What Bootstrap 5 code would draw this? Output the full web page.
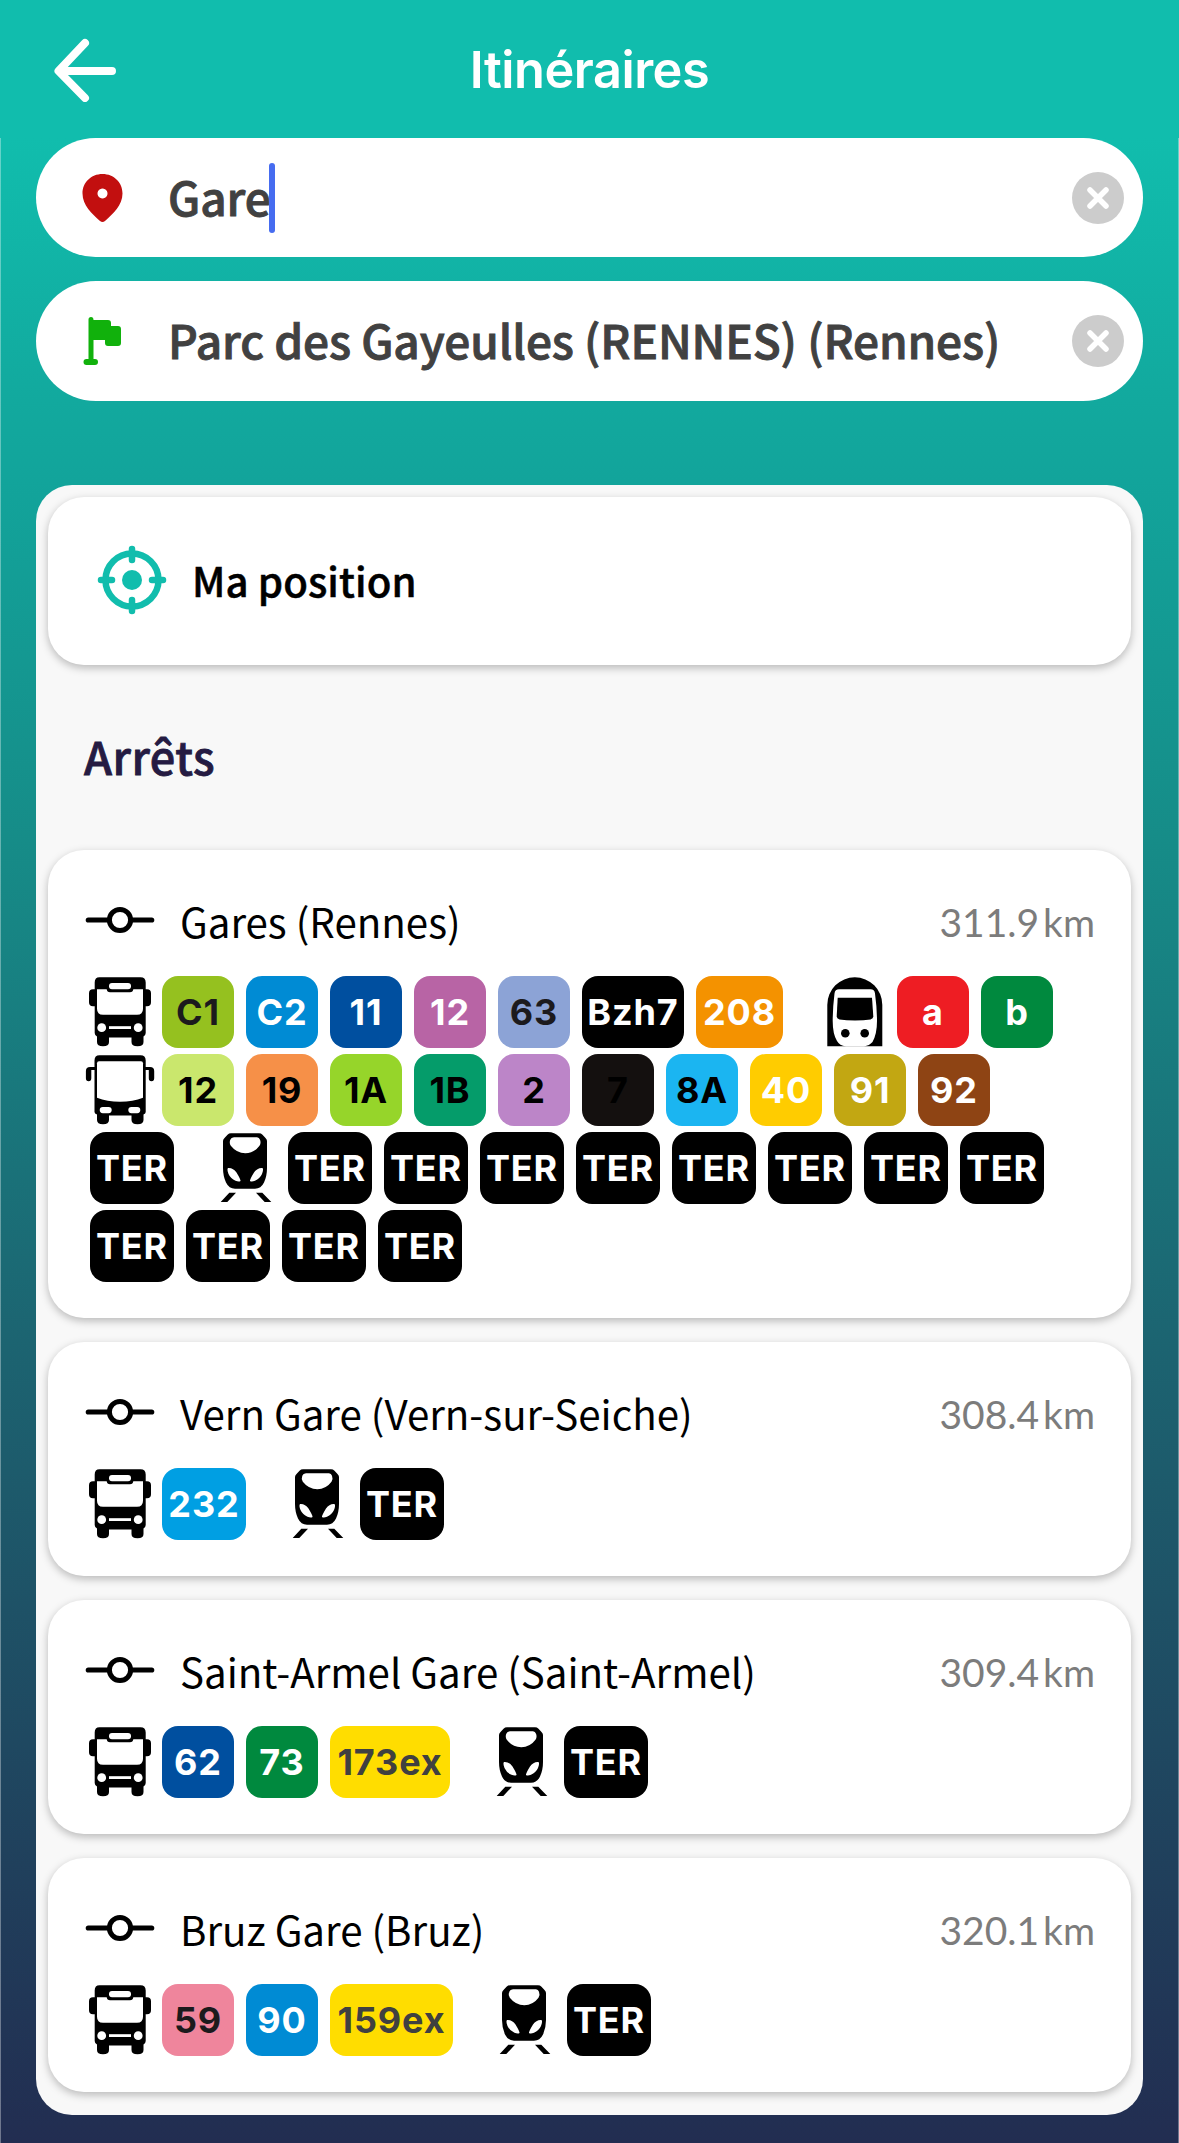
<!DOCTYPE html>
<html lang="fr">
<head>
<meta charset="utf-8">
<meta name="viewport" content="width=device-width, initial-scale=1">
<title>Itinéraires</title>
<link href="https://cdn.jsdelivr.net/npm/bootstrap@5.3.0/dist/css/bootstrap.min.css" rel="stylesheet">
<style>
  body { font-family: "Noto Sans CJK SC", "Noto Sans", sans-serif; background: #222d51; color: #000; }
  .topbar { height: 138px; background: #11bdad; padding: 2px 54px 0; }
  .topbar h1 { font: 600 50.500px/1 Inter, sans-serif; letter-spacing: -.5px; color: #fff; }
  .side { width: 62px; }
  .screen { height: 2005px; padding: 0 35px; border: solid rgba(255,255,255,.35); border-width: 0 1px;
    background: linear-gradient(180deg, #11bdad 0, #12a99e 262px, #12a49b 342px, #168c88 702px, #1c6471 1202px, #222d51 2005px); }
  .field { height: 120px; border-radius: 60px; background: #fff; color: #414141; font-size: 46px; line-height: 60px; font-weight: 500; letter-spacing: -.1px; padding: 0 19px 0 43px; }
  .field-label { padding-bottom: 4px; -webkit-text-stroke: .9px #414141; }
  .field-first { height: 119px; margin-bottom: 24px; }
  .field-icon { width: 48px; height: 48px; margin-right: 41px; }
  .caret { width: 6px; height: 70px; margin-left: -2px; border-radius: 3px; background: #466cf0; }
  .panel { margin-top: 84px; height: 1630px; border-radius: 36px; background: #f8f8f8; padding: 12px; }
  .tile { border: 0; border-radius: 36px; box-shadow: 0 3px 8px rgba(0,0,0,.26); color: #000; }
  .tile-pos { height: 168px; padding: 0 48px 2px; font-size: 40.200px; font-weight: 500; letter-spacing: .1px; -webkit-text-stroke: .5px #000; }
  .section-title { height: 185px; padding: 0 0 4px 36px; font-size: 45px; font-weight: 500; letter-spacing: .5px; color: #251b42; -webkit-text-stroke: .8px #251b42; }
  .stop { padding: 36px; margin-bottom: 24px; }
  .stop-head { height: 72px; margin-bottom: 18px; padding-left: 1px; font-size: 40.250px; }
  .stop-head .stop-name { padding-bottom: 2px; }
  .stop-icon { margin: 0 25px 4px 0; }
  .dist { font: 400 39px/1 Lato, sans-serif; word-spacing: -6px; color: #7c7c7c; }
  .lines { height: 72px; margin-bottom: 6px; }
  .lines:last-child { margin-bottom: 0; }
  .mode { width: 72px; height: 72px; }
  .mode-next { margin-left: 30px; }
  .ln { height: 72px; min-width: 72px; margin: 0 6px; border-radius: 16px; font: 650 36px/72px Inter, sans-serif; letter-spacing: .9px; text-align: center; color: #fff; background: #000; }
  .w84 { width: 84px; } .w87 { width: 87px; } .w102 { width: 102px; } .w120 { width: 120px; } .w123 { width: 123px; }
  .ink { color: #1c1a1d; } .blk { color: #000; } .gry { color: #404040; }
  .c-c1 { background: #95c11f; } .c-c2 { background: #008bd4; } .c-11 { background: #004f9f; } .c-12 { background: #b864a5; }
  .c-63 { background: #8ca3d6; } .c-208 { background: #f49200; } .c-a { background: #ee1d23; } .c-b { background: #00893e; }
  .c-12i { background: #cae76d; } .c-19 { background: #f69048; } .c-1a { background: #96d52a; } .c-1b { background: #059c6a; }
  .c-2 { background: #bc85c8; } .c-7 { background: #14100f; } .c-8a { background: #1bb5f1; } .c-40 { background: #ffcc00; }
  .c-91 { background: #c2a712; } .c-92 { background: #8e4414; } .c-232 { background: #009fe3; } .c-ex { background: #ffdd00; } .c-59 { background: #ef859c; }
</style>
</head>
<body>
<svg class="d-none" aria-hidden="true">
  <symbol id="bus" viewBox="0 0 72 72">
    <path d="M15.500 1.300h41q5.200 0 5.200 5.200V13.300h1.300q4 0 4 4v9q0 4-4 4h-1.300V57q0 2-2.200 3.500V66q0 4.300-6 4.300T47.500 66V61.500H25V66q0 4.300-6 4.300T13 66V60.500Q10.700 59 10.700 57V30.300H9q-4 0-4-4v-9q0-4 4-4h1.700V6.500q0-5.200 4.800-5.200z"/>
    <path fill="#fff" d="M13 13.300h9.700q.3 3 3.300 3h20q3 0 3.300-3H59v19.400q0 6-6 6H19q-6 0-6-6z"/>
    <rect x="25" y="7" width="22" height="6.300" rx="3" fill="#fff"/>
    <circle cx="17.700" cy="51.700" r="4.400" fill="#fff"/><circle cx="54.200" cy="51.700" r="4.400" fill="#fff"/>
    <rect x="25" y="50.200" width="22" height="2.800" fill="#fff"/>
  </symbol>
  <symbol id="coach" viewBox="0 0 72 72">
    <path d="M15.500 1.300h41q5.200 0 5.200 5.200V13h4.300q4.200 0 4.200 4v7.300q0 3-2.700 3t-2.700-3V16h-3.100v42q0 1.500-2.200 2.500V66q0 4.200-6 4.200T47.500 66V61.500H25V66q0 4.200-6 4.200T13 66V60.500Q10.500 59.500 10.500 58V16H7.300v8.300q0 3-2.700 3t-2.700-3V17q0-4 4.200-4h4.400V6.500q0-5.200 5-5.200z"/>
    <path fill="#fff" d="M15 7.300H57Q59 7.300 59 9.300V43.700Q49 47.700 36 47.700T13 43.700V9.300Q13 7.300 15 7.300z"/>
    <rect x="15.700" y="53" width="12" height="6.200" rx="3.100" fill="#fff"/><rect x="44.300" y="53" width="12" height="6.200" rx="3.100" fill="#fff"/>
  </symbol>
  <symbol id="metro" viewBox="0 0 72 72">
    <path d="M8.300 70.300V28.800a27.500 27.500 0 0 1 55 0V70.300z"/>
    <path fill="#fff" d="M20 13.300H51.500q4 0 4.500 4.200Q58 32 58 45 58 58 53.500 66 50.500 69.500 45 70.500H27Q20.500 69.500 18 65 13.700 58 13.700 45 13.700 32 15.500 17.500q.5-4.200 4.500-4.200z"/>
    <path d="M18.700 21.700H53L54.300 40.500Q54.300 42.700 51.500 43.500 45 44.600 36 44.600T20.500 43.500Q17.700 42.700 17.700 40.500z"/>
    <circle cx="26.300" cy="57.300" r="4.300"/><circle cx="45.700" cy="57.300" r="4.300"/>
  </symbol>
  <symbol id="train" viewBox="0 0 72 72">
    <path d="M21 1.300H49q2 0 3.500 1.400l3 3.300Q57 7.500 57 9V36q0 8-3 14.500-3 6.200-9 6.200H25q-6 0-9-6.200Q13 44 13 36V9q0-1.500 1.500-3l3-3.300Q19 1.300 21 1.300z"/>
    <path fill="#fff" d="M24 5.300H47q2.200 0 3 2.500 1.300 3.200-.5 6Q44 21.200 35.300 21.200T20.800 13.800q-1.800-2.800-.5-6 .8-2.500 3.700-2.500z"/>
    <path fill="#fff" d="M18 36q5-.5 8.500 4.500 4.500 7.500 4 8.500-1.500 1.200-5-.2-4.800-2-7-6.800-1.800-4.500-.5-6zM52.500 36q-5-.5-8.500 4.500-4.500 7.500-4 8.500 1.500 1.200 5-.2 4.800-2 7-6.800 1.800-4.500.5-6z"/>
    <path d="M19.300 60.700H26L17.300 70H10.700zM46 60.700h6.300l9 9.300H54.700z"/>
  </symbol>
  <symbol id="stop" viewBox="0 0 70 30">
    <path d="M3.300 15H66.700" stroke="#000" stroke-width="5.200" stroke-linecap="round"/>
    <circle cx="35" cy="15" r="10.600" fill="#fff" stroke="#000" stroke-width="5"/>
  </symbol>
  <symbol id="clear" viewBox="0 0 52 52">
    <circle cx="26" cy="26" r="26" fill="#ccc"/>
    <path d="M18 18 34 34M34 18 18 34" stroke="#fff" stroke-width="5.500" stroke-linecap="round"/>
  </symbol>
</svg>

<header class="topbar d-flex align-items-center justify-content-between">
  <div class="side"><svg width="62" height="64" viewBox="0 0 62 64" fill="none" stroke="#fff" stroke-width="8" stroke-linecap="round" stroke-linejoin="round"><path d="M31 5 4.500 33 31 60M6 33H58"/></svg></div>
  <h1 class="m-0">Itinéraires</h1>
  <div class="side"></div>
</header>

<main class="screen">
  <div class="field field-first d-flex align-items-center">
    <svg class="field-icon" viewBox="0 0 48 48"><path fill="#c20f0f" fill-rule="evenodd" d="M23.500 0C12 0 3.500 8.500 3.500 19.500 3.500 31 13 40 21 47q2.500 1.800 5 0C34 40 43.500 31 43.500 19.500 43.500 8.500 35 0 23.500 0zm0 14.500a5 5 0 1 0 .01 0z"/></svg>
    <span class="field-label">Gare</span><span class="caret"></span>
    <svg class="ms-auto" width="52" height="52"><use href="#clear"/></svg>
  </div>
  <div class="field d-flex align-items-center">
    <svg class="field-icon" viewBox="0 0 48 48"><path fill="#11b10c" d="M9.500 2.500q0-2.500 2.500-2.500t2.500 3H29q3 0 3 3v3h7q3 0 3 3v14q0 3-3 3H29q-3 0-3-3v-3H14.500V42H16q3 0 3 3t-3 3H7.500q-3 0-3-3t3-3h2z"/></svg>
    <span class="field-label">Parc des Gayeulles (RENNES) (Rennes)</span>
    <svg class="ms-auto" width="52" height="52"><use href="#clear"/></svg>
  </div>

  <section class="panel">
    <div class="card tile tile-pos flex-row align-items-center">
      <svg width="72" height="72" viewBox="-36 -36 72 72" fill="none" stroke="#11bdad" stroke-width="6.500"><circle r="26.500"/><path d="M0-31V-20M0 20V31M-31 0H-20M20 0H31" stroke-linecap="round"/><circle r="10" fill="#11bdad" stroke="none"/></svg>
      <span class="ms-4">Ma position</span>
    </div>
    <h2 class="section-title d-flex align-items-center m-0">Arrêts</h2>

    <article class="card tile stop">
      <div class="stop-head d-flex align-items-center"><svg class="stop-icon" width="70" height="30"><use href="#stop"/></svg><span class="stop-name">Gares (Rennes)</span><span class="dist ms-auto">311.9 km</span></div>
      <div class="lines d-flex"><svg class="mode"><use href="#bus"/></svg><span class="ln c-c1 ink">C1</span><span class="ln c-c2">C2</span><span class="ln c-11">11</span><span class="ln c-12">12</span><span class="ln c-63 ink">63</span><span class="ln w102">Bzh7</span><span class="ln w87 c-208">208</span><svg class="mode mode-next"><use href="#metro"/></svg><span class="ln c-a">a</span><span class="ln c-b">b</span></div>
      <div class="lines d-flex"><svg class="mode"><use href="#coach"/></svg><span class="ln c-12i blk">12</span><span class="ln c-19 blk">19</span><span class="ln c-1a blk">1A</span><span class="ln c-1b blk">1B</span><span class="ln c-2 blk">2</span><span class="ln c-7 blk">7</span><span class="ln c-8a blk">8A</span><span class="ln c-40">40</span><span class="ln c-91">91</span><span class="ln c-92">92</span></div>
      <div class="lines d-flex"><span class="ln w84">TER</span><svg class="mode mode-next"><use href="#train"/></svg><span class="ln w84">TER</span><span class="ln w84">TER</span><span class="ln w84">TER</span><span class="ln w84">TER</span><span class="ln w84">TER</span><span class="ln w84">TER</span><span class="ln w84">TER</span><span class="ln w84">TER</span></div>
      <div class="lines d-flex"><span class="ln w84">TER</span><span class="ln w84">TER</span><span class="ln w84">TER</span><span class="ln w84">TER</span></div>
    </article>

    <article class="card tile stop">
      <div class="stop-head d-flex align-items-center"><svg class="stop-icon" width="70" height="30"><use href="#stop"/></svg><span class="stop-name">Vern Gare (Vern-sur-Seiche)</span><span class="dist ms-auto">308.4 km</span></div>
      <div class="lines d-flex"><svg class="mode"><use href="#bus"/></svg><span class="ln w84 c-232">232</span><svg class="mode mode-next"><use href="#train"/></svg><span class="ln w84">TER</span></div>
    </article>

    <article class="card tile stop">
      <div class="stop-head d-flex align-items-center"><svg class="stop-icon" width="70" height="30"><use href="#stop"/></svg><span class="stop-name">Saint-Armel Gare (Saint-Armel)</span><span class="dist ms-auto">309.4 km</span></div>
      <div class="lines d-flex"><svg class="mode"><use href="#bus"/></svg><span class="ln c-11">62</span><span class="ln c-b">73</span><span class="ln w120 c-ex gry">173ex</span><svg class="mode mode-next"><use href="#train"/></svg><span class="ln w84">TER</span></div>
    </article>

    <article class="card tile stop mb-0">
      <div class="stop-head d-flex align-items-center"><svg class="stop-icon" width="70" height="30"><use href="#stop"/></svg><span class="stop-name">Bruz Gare (Bruz)</span><span class="dist ms-auto">320.1 km</span></div>
      <div class="lines d-flex"><svg class="mode"><use href="#bus"/></svg><span class="ln c-59 ink">59</span><span class="ln c-c2">90</span><span class="ln w123 c-ex gry">159ex</span><svg class="mode mode-next"><use href="#train"/></svg><span class="ln w84">TER</span></div>
    </article>
  </section>
</main>
<script src="https://cdn.jsdelivr.net/npm/bootstrap@5.3.0/dist/js/bootstrap.bundle.min.js"></script>
</body>
</html>
